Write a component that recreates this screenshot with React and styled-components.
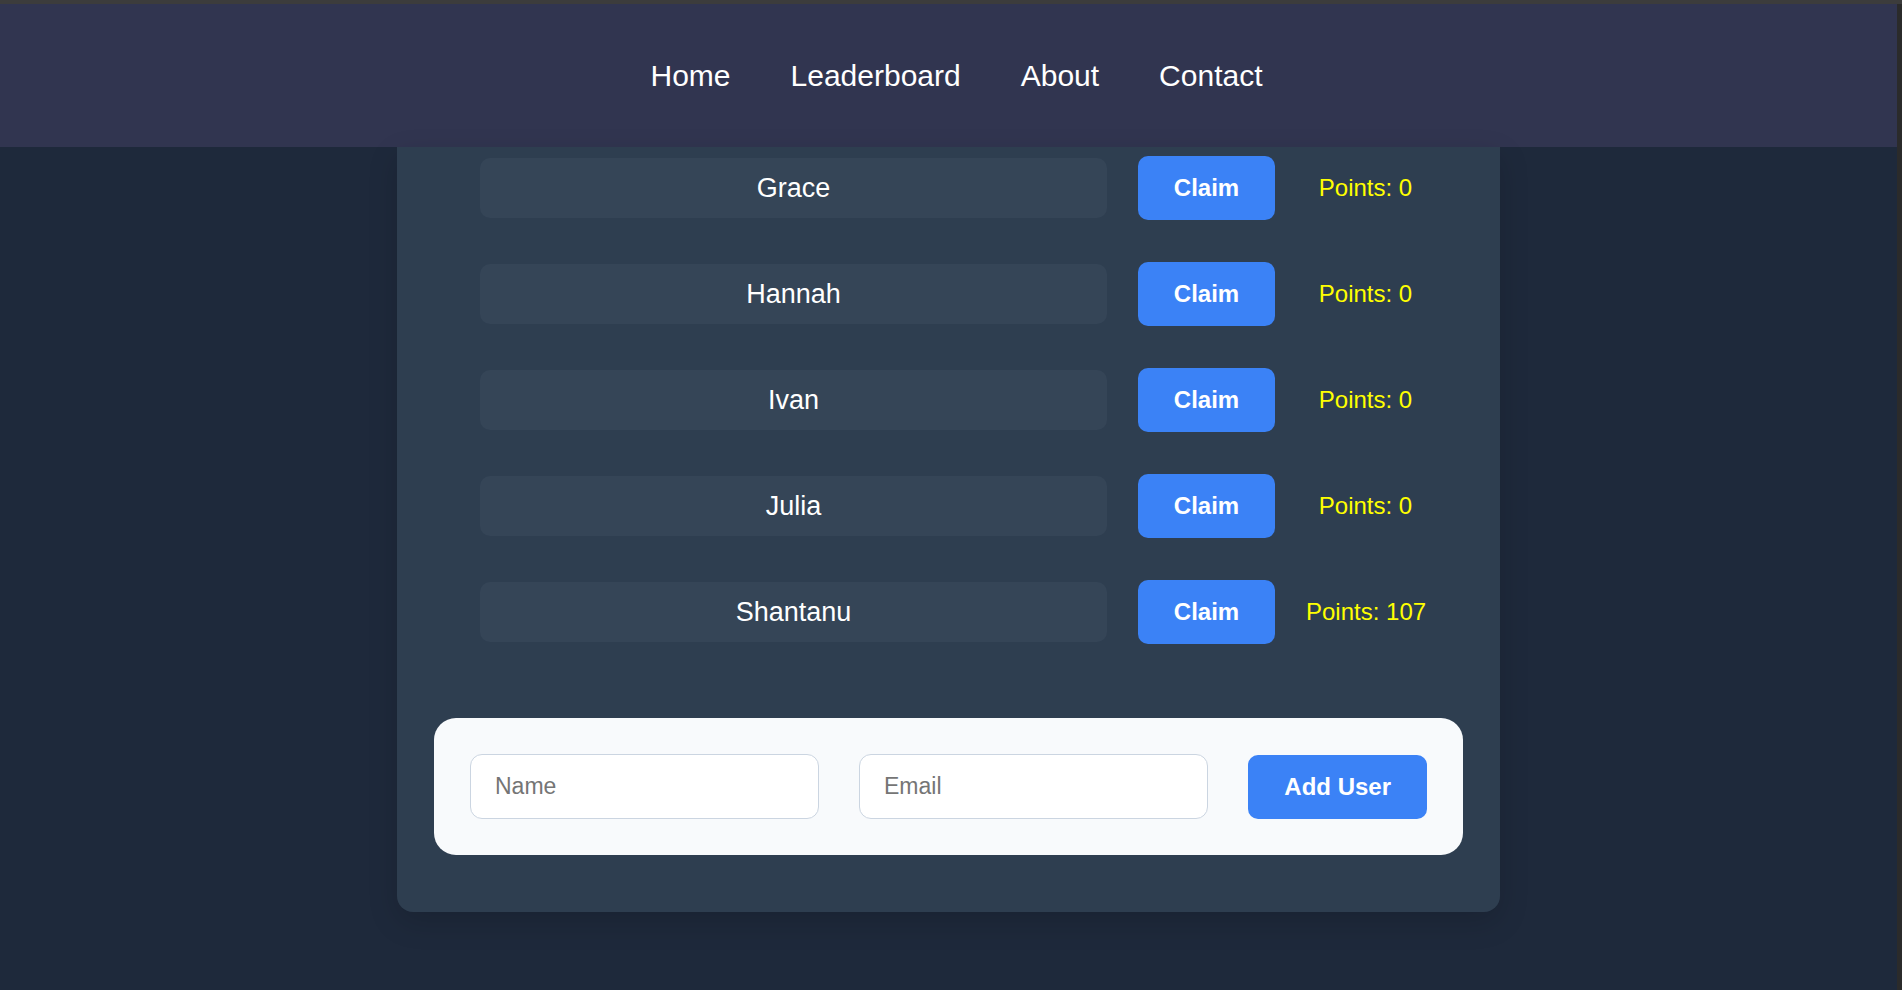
import React, { useState } from "react";
import styled, { createGlobalStyle } from "styled-components";

const GlobalStyle = createGlobalStyle`
    body {
        margin: 0;
        padding-right: 5px;
        border-top: 4px solid #3c3c3c;
        background: #1e293b;
        font-family: "Liberation Sans", Arial, sans-serif;
        min-height: 100vh;
    }
    /* the window's thin scrollbar gutter */
    body::after {
        content: "";
        position: fixed;
        top: 4px;
        right: 0;
        bottom: 0;
        width: 5px;
        background: #2b2b2b;
    }
    * {
        box-sizing: border-box;
    }
`;

const users = [
    { name: "Grace", points: 0 },
    { name: "Hannah", points: 0 },
    { name: "Ivan", points: 0 },
    { name: "Julia", points: 0 },
    { name: "Shantanu", points: 107 },
];

const App = () => {
    const [list, setList] = useState(users);
    const [name, setName] = useState("");
    const [email, setEmail] = useState("");

    const claim = (i) => {
        setList(list.map((u, idx) => (idx === i ? { ...u, points: u.points + 1 } : u)));
    };

    const addUser = () => {
        if (!name) return;
        setList([...list, { name, points: 0 }]);
        setName("");
        setEmail("");
    };

    return (
        <>
            <GlobalStyle />
            <Navbar>
                <NavList>
                    <li><a href="#">Home</a></li>
                    <li><a href="#">Leaderboard</a></li>
                    <li><a href="#">About</a></li>
                    <li><a href="#">Contact</a></li>
                </NavList>
            </Navbar>
            <Card>
                <UserList>
                    {list.map((u, i) => (
                        <UserRow key={u.name + i}>
                            <UserName>{u.name}</UserName>
                            <ClaimButton onClick={() => claim(i)}>Claim</ClaimButton>
                            <Points>Points: {u.points}</Points>
                        </UserRow>
                    ))}
                </UserList>
                <AddForm onSubmit={(e) => { e.preventDefault(); addUser(); }}>
                    <Input type="text" placeholder="Name" value={name} onChange={(e) => setName(e.target.value)} />
                    <Input type="email" placeholder="Email" value={email} onChange={(e) => setEmail(e.target.value)} />
                    <AddButton type="submit">Add User</AddButton>
                </AddForm>
            </Card>
        </>
    );
};

const Navbar = styled.nav`
    height: 143px;
    background: #313550;
    display: flex;
    align-items: center;
    justify-content: center;
`;

const NavList = styled.ul`
    display: flex;
    gap: 60px;
    list-style: none;
    margin: 0;
    padding: 0 0 0 16px;

    a {
        color: #ffffff;
        text-decoration: none;
        font-size: 30px;
    }
`;

const Card = styled.main`
    width: 1103px;
    margin: 0 auto;
    background: #2e3e50;
    border-radius: 0 0 16px 16px;
    padding: 9px 37px 57px;
    box-shadow: 0 10px 30px rgba(0, 0, 0, 0.15);
`;

const UserList = styled.div`
    display: flex;
    flex-direction: column;
    gap: 42px;
    padding: 0 38px 0 46px;
`;

const UserRow = styled.div`
    display: flex;
    align-items: center;
    gap: 31px;
`;

const UserName = styled.div`
    flex: 1;
    height: 60px;
    display: flex;
    align-items: center;
    justify-content: center;
    background: #354557;
    border-radius: 10px;
    color: #ffffff;
    font-size: 27px;
`;

const ClaimButton = styled.button`
    width: 137px;
    height: 64px;
    border: none;
    border-radius: 10px;
    background: #3b82f6;
    color: #ffffff;
    font-family: inherit;
    font-size: 24px;
    font-weight: bold;
    cursor: pointer;
`;

const Points = styled.span`
    width: 119px;
    text-align: center;
    color: #ffff00;
    font-size: 24px;
    white-space: nowrap;
`;

const AddForm = styled.form`
    margin-top: 74px;
    background: #f8fafc;
    border-radius: 22px;
    padding: 36px;
    display: flex;
    align-items: center;
    gap: 40px;
`;

const Input = styled.input`
    width: 349px;
    height: 65px;
    padding: 0 24px;
    border: 1px solid #cbd5e1;
    border-radius: 12px;
    background: #ffffff;
    font-family: inherit;
    font-size: 23px;
    color: #333333;
    outline: none;

    &::placeholder {
        color: #757575;
    }
`;

const AddButton = styled.button`
    margin-left: auto;
    height: 64px;
    padding: 0 36px;
    border: none;
    border-radius: 10px;
    background: #3b82f6;
    color: #ffffff;
    font-family: inherit;
    font-size: 24px;
    font-weight: bold;
    cursor: pointer;
`;

export default App;
